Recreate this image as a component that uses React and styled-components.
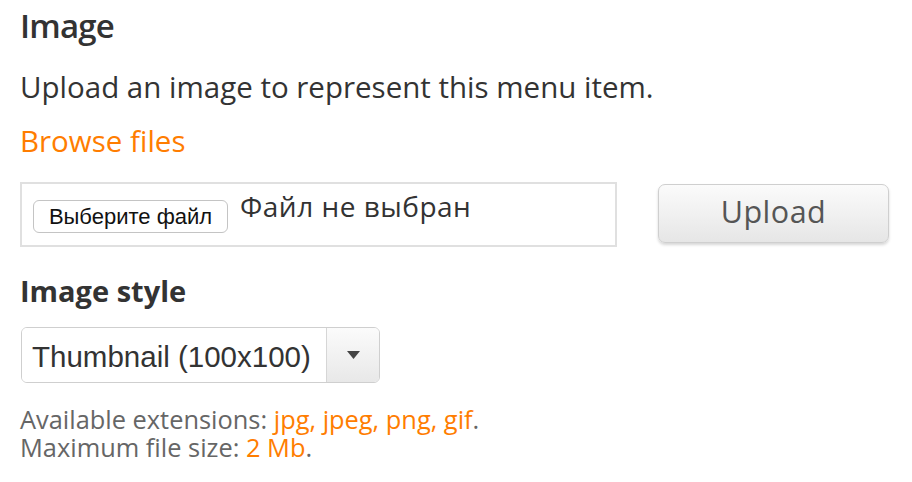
import React from "react";
import styled, { createGlobalStyle } from "styled-components";

const Global = createGlobalStyle`
  html, body { margin: 0; padding: 0; background: #fff; }
  body { font-family: "Open Sans", "Liberation Sans", sans-serif; color: #333; }
`;

const Page = styled.div`
  width: 912px;
  height: 482px;
  box-sizing: border-box;
  padding: 3px 20px 0;
  overflow: hidden;
`;

const Title = styled.h2`
  margin: 0;
  font-size: 33px;
  font-weight: 600;
  letter-spacing: -0.8px;
  line-height: 45px;
  color: #333;
`;

const SubTitle = styled.h3`
  margin: 24px 0 0;
  font-size: 29px;
  font-weight: 700;
  line-height: 40px;
  color: #333;
`;

const Text = styled.p`
  margin: 19px 0 0;
  font-size: 29.5px;
  line-height: 40px;
  color: #333;
`;

const Link = styled.a`
  display: block;
  margin-top: 14px;
  font-size: 29.5px;
  line-height: 40px;
  color: #ff7d00;
  text-decoration: none;
`;

const Row = styled.div`
  display: flex;
  align-items: flex-start;
  gap: 41px;
  margin-top: 21px;
`;

const FileBox = styled.div`
  box-sizing: border-box;
  width: 597px;
  height: 65px;
  border: 2px solid #e0e0e0;
  display: flex;
  align-items: flex-start;
  padding: 0 11px;
  gap: 12px;
`;

const ChooseButton = styled.button`
  box-sizing: border-box;
  width: 195px;
  height: 33px;
  margin-top: 16px;
  border: 1px solid #c4c4c4;
  border-radius: 6px;
  background: #fff;
  font-family: "Liberation Sans", Arial, sans-serif;
  font-size: 22px;
  line-height: 1;
  color: #111;
  padding: 0;
`;

const NoFile = styled.span`
  margin-top: 4px;
  font-size: 28px;
  line-height: 36px;
  letter-spacing: 0.5px;
  color: #333;
`;

const UploadButton = styled.button`
  box-sizing: border-box;
  width: 231px;
  height: 59px;
  margin-top: 2px;
  padding: 0 0 6px;
  border: 1px solid #cfcfcf;
  border-radius: 7px;
  background: linear-gradient(#fbfbfb, #e6e6e6);
  box-shadow: 0 2px 3px rgba(0, 0, 0, 0.16);
  font-family: "Open Sans", sans-serif;
  font-size: 30.5px;
  letter-spacing: 0.5px;
  color: #555;
`;

const Select = styled.div`
  box-sizing: border-box;
  width: 359px;
  height: 56px;
  margin: 16px 0 0 1px;
  border: 1px solid #cfcfcf;
  border-radius: 6px;
  display: flex;
  overflow: hidden;
`;

const SelectValue = styled.div`
  flex: 1;
  display: flex;
  align-items: center;
  padding: 3px 0 0 10px;
  font-family: "Liberation Sans", Arial, sans-serif;
  font-size: 29.5px;
  color: #333;
  background: #fff;
`;

const SelectArrow = styled.div`
  width: 52px;
  border-left: 1px solid #d6d6d6;
  background: linear-gradient(#fbfbfb, #e8e8e8);
  display: flex;
  align-items: center;
  justify-content: center;
`;

const Description = styled.div`
  margin-top: 22px;
  font-size: 25.4px;
  line-height: 28px;
  color: #666;
`;

const Accent = styled.span`
  color: #ff7d00;
`;

export default function App() {
  return (
    <>
      <Global />
      <Page>
        <Title>Image</Title>
        <Text>Upload an image to represent this menu item.</Text>
        <Link href="#">Browse files</Link>
        <Row>
          <FileBox>
            <ChooseButton>Выберите файл</ChooseButton>
            <NoFile>Файл не выбран</NoFile>
          </FileBox>
          <UploadButton>Upload</UploadButton>
        </Row>
        <SubTitle>Image style</SubTitle>
        <Select>
          <SelectValue>Thumbnail (100x100)</SelectValue>
          <SelectArrow>
            <svg width="13" height="8" viewBox="0 0 13 8">
              <path d="M0 0h13L6.5 8z" fill="#444" />
            </svg>
          </SelectArrow>
        </Select>
        <Description>
          Available extensions: <Accent>jpg, jpeg, png, gif</Accent>.
          <br />
          Maximum file size: <Accent>2 Mb</Accent>.
        </Description>
      </Page>
    </>
  );
}
